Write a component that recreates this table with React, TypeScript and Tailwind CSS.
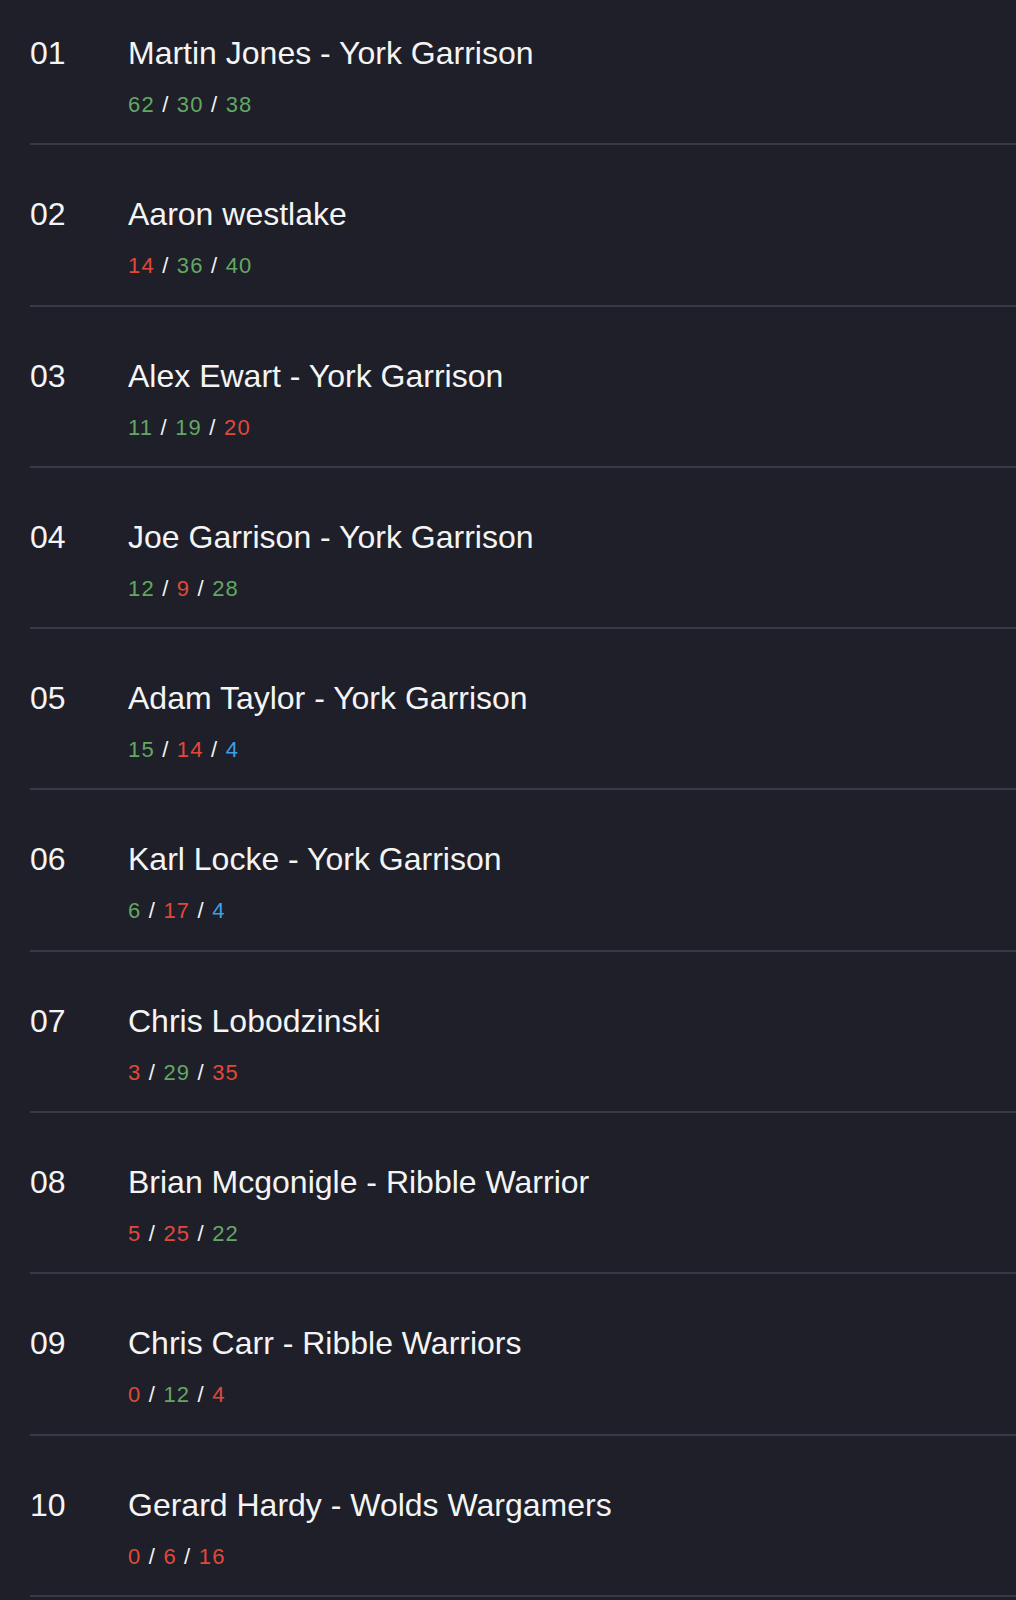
import React from 'react'

type Tone = 'good' | 'bad' | 'info'

type Entry = {
  rank: string
  name: string
  stats: [number, Tone][]
}

const entries: Entry[] = [
  { rank: '01', name: 'Martin Jones - York Garrison', stats: [[62, 'good'], [30, 'good'], [38, 'good']] },
  { rank: '02', name: 'Aaron westlake', stats: [[14, 'bad'], [36, 'good'], [40, 'good']] },
  { rank: '03', name: 'Alex Ewart - York Garrison', stats: [[11, 'good'], [19, 'good'], [20, 'bad']] },
  { rank: '04', name: 'Joe Garrison - York Garrison', stats: [[12, 'good'], [9, 'bad'], [28, 'good']] },
  { rank: '05', name: 'Adam Taylor - York Garrison', stats: [[15, 'good'], [14, 'bad'], [4, 'info']] },
  { rank: '06', name: 'Karl Locke - York Garrison', stats: [[6, 'good'], [17, 'bad'], [4, 'info']] },
  { rank: '07', name: 'Chris Lobodzinski', stats: [[3, 'bad'], [29, 'good'], [35, 'bad']] },
  { rank: '08', name: 'Brian Mcgonigle - Ribble Warrior', stats: [[5, 'bad'], [25, 'bad'], [22, 'good']] },
  { rank: '09', name: 'Chris Carr - Ribble Warriors', stats: [[0, 'bad'], [12, 'good'], [4, 'bad']] },
  { rank: '10', name: 'Gerard Hardy - Wolds Wargamers', stats: [[0, 'bad'], [6, 'bad'], [16, 'bad']] },
]

const toneClass: Record<Tone, string> = {
  good: 'text-[#62a862]',
  bad: 'text-[#e0493a]',
  info: 'text-[#3d9fe3]',
}

const Row: React.FC<{ entry: Entry; first: boolean }> = ({ entry, first }) => {
  return (
    <div
      className={`flex border-b-2 border-[#383944] pb-[26.3px] ${first ? 'pt-[34px]' : 'pt-[50px]'}`}
    >
      <div className="w-[98px] shrink-0 text-[32px] leading-[38px] text-[#f4f4f4]">{entry.rank}</div>
      <div className="flex flex-col">
        <div className="text-[32px] leading-[38px] text-[#f4f4f4]">{entry.name}</div>
        <div className="mt-[20px] text-[22px] leading-[25px] tracking-[1.2px] text-[#f4f4f4]">
          {entry.stats.map(([value, tone], i) => (
            <React.Fragment key={i}>
              {i > 0 ? ' / ' : null}
              <span className={toneClass[tone]}>{value}</span>
            </React.Fragment>
          ))}
        </div>
      </div>
    </div>
  )
}

export default function App() {
  return (
    <div
      className="min-h-[1600px] w-full bg-[#1e1f29] pl-[30px]"
      style={{ fontFamily: '"Liberation Sans", Arial, sans-serif' }}
    >
      {entries.map((entry, i) => (
        <Row key={entry.rank} entry={entry} first={i === 0} />
      ))}
    </div>
  )
}
